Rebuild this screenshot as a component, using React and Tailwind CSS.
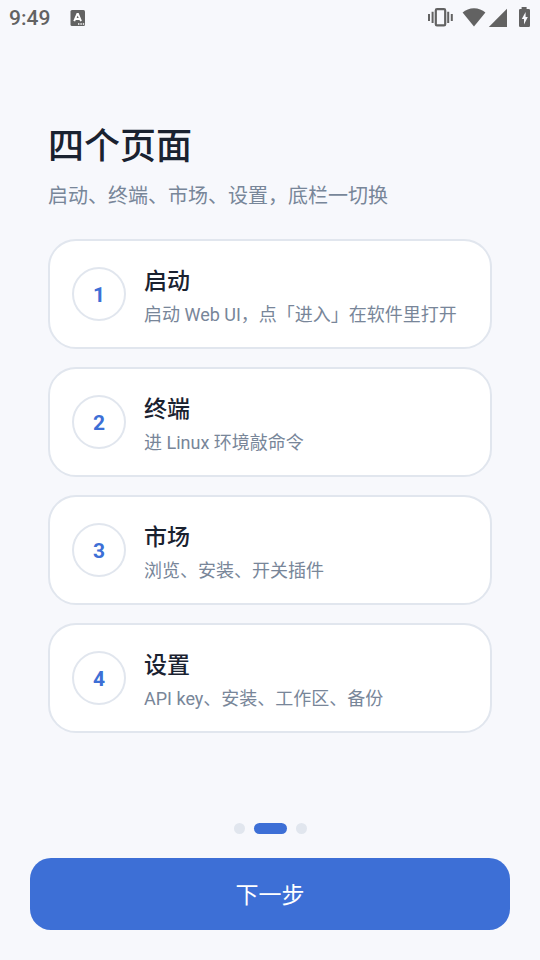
const STEPS = [
  { title: "启动", text: "启动 Web UI，点「进入」在软件里打开" },
  { title: "终端", text: "进 Linux 环境敲命令" },
  { title: "市场", text: "浏览、安装、开关插件" },
  { title: "设置", text: "API key、安装、工作区、备份" },
];

function StatusBar() {
  return (
    <header className="flex h-9 items-center justify-between pl-[9px] pr-2 text-[#626262]">
      <div className="flex items-center gap-5">
        <time className="text-[21px] leading-[26px] font-medium">9:49</time>
        <svg className="size-4" viewBox="0 0 16 16" aria-hidden="true">
          <rect x="0.5" y="0" width="14.5" height="16" rx="1.5" fill="currentColor" />
          <path d="M4.2 11.2 7.3 4h.7l3 7.2M5.4 9h4.4" fill="none" stroke="#fff" strokeWidth="1.9" />
          <path d="M8 14h1.4M10.4 14h1.4M12.8 14h1.4" stroke="#fff" strokeWidth="1.5" />
        </svg>
      </div>
      <svg className="h-6 w-[104px]" viewBox="428 6 104 24" fill="currentColor" aria-hidden="true">
        <rect x="435.8" y="9.2" width="9.4" height="16.2" rx="1.2" fill="none" stroke="currentColor" strokeWidth="2.2" />
        <path d="M428 14h2v7h-2zM431.6 11.8h2v11.2h-2zM447.2 11.8h2v11.2h-2zM450.8 14h2v7h-2z" />
        <path d="M474 26.6 462.6 12.6C465.6 9.8 469.6 8.2 474 8.2s8.4 1.6 11.4 4.4z" />
        <path d="M507 8.8V27h-18.2z" />
        <path
          fillRule="evenodd"
          d="M521.6 7h5v2h2.2q1.2 0 1.2 1.2V25.8q0 1.2-1.2 1.2h-8.6q-1.2 0-1.2-1.2V10.2q0-1.2 1.2-1.2h1.4zM525.6 12l-3.8 7h2.2v5.4l3.8-7.4h-2.2z"
        />
      </svg>
    </header>
  );
}

function StepCard({ number, title, text }) {
  return (
    <li className="flex items-center gap-[18px] rounded-[28px] border-2 border-[#e1e6ee] bg-white px-[22px] py-5">
      <span className="flex size-[54px] shrink-0 items-center justify-center rounded-full border-2 border-[#e1e6ee] pt-[3px] text-[21px] font-bold text-[#3d6fd6]">
        {number}
      </span>
      <div className="min-w-0">
        <h2 className="text-[23px] leading-[42px] font-medium text-[#1a2230]">{title}</h2>
        <p className="text-lg leading-6 text-[#788699]">{text}</p>
      </div>
    </li>
  );
}

export default function App() {
  return (
    <div className="flex min-h-screen flex-col bg-[#f7f8fc] font-[Roboto,'Noto_Sans_CJK_SC',sans-serif]" lang="zh-CN">
      <StatusBar />
      <main className="flex flex-1 flex-col justify-center px-12 pb-[5px]">
        <h1 className="text-4xl leading-[52px] font-medium text-[#1a2230]">四个页面</h1>
        <p className="mt-2 text-xl leading-[30px] text-[#788699]">启动、终端、市场、设置，底栏一切换</p>
        <ol className="mt-7 flex flex-col gap-[18px]">
          {STEPS.map((step, i) => (
            <StepCard key={step.title} number={i + 1} title={step.title} text={step.text} />
          ))}
        </ol>
      </main>
      <footer className="flex flex-col gap-6 px-[30px] pb-[30px]">
        <div className="flex justify-center gap-[9px]" aria-hidden="true">
          <span className="size-[11px] rounded-full bg-[#e1e6ee]" />
          <span className="h-[11px] w-[33px] rounded-full bg-[#3d6fd6]" />
          <span className="size-[11px] rounded-full bg-[#e1e6ee]" />
        </div>
        <button type="button" className="h-[72px] rounded-[21px] bg-[#3d6fd6] pt-1 text-[23px] text-white">
          下一步
        </button>
      </footer>
    </div>
  );
}
